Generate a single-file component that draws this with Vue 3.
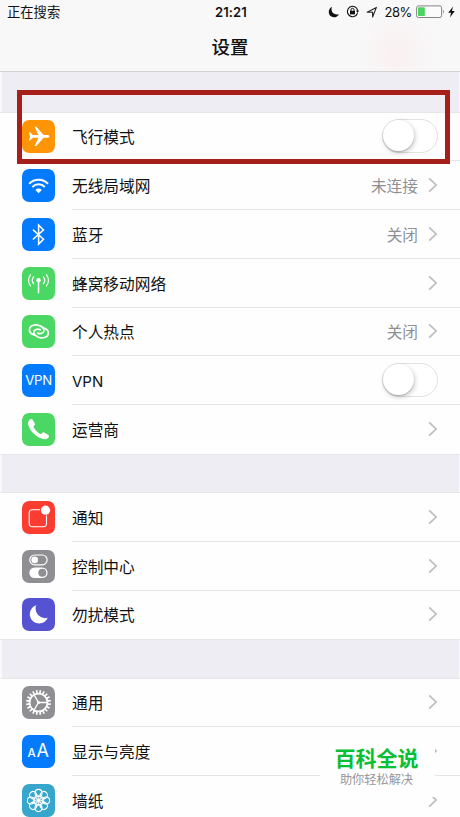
<script setup>
const groups = [
  [
    { icon: 'plane', color: '#ff9504', label: '飞行模式', toggle: true },
    { icon: 'wifi', color: '#047afd', label: '无线局域网', value: '未连接' },
    { icon: 'bluetooth', color: '#047afd', label: '蓝牙', value: '关闭' },
    { icon: 'cellular', color: '#4bd763', label: '蜂窝移动网络' },
    { icon: 'hotspot', color: '#4bd763', label: '个人热点', value: '关闭' },
    { icon: 'vpn', color: '#047afd', label: 'VPN', toggle: true },
    { icon: 'phone', color: '#4bd763', label: '运营商' },
  ],
  [
    { icon: 'notify', color: '#fb3c31', label: '通知' },
    { icon: 'control', color: '#8e8e93', label: '控制中心' },
    { icon: 'moon', color: '#5653d2', label: '勿扰模式' },
  ],
  [
    { icon: 'gear', color: '#8e8e93', label: '通用' },
    { icon: 'display', color: '#047afd', label: '显示与亮度' },
    { icon: 'flower', color: '#36a6cc', label: '墙纸' },
  ],
]
const teeth = Array.from({ length: 20 }, (_, i) => i * 18)
const petals = Array.from({ length: 8 }, (_, i) => i * 45)
</script>

<template>
  <div class="screen">
    <header class="header">
      <div class="status">
        <span class="carrier">正在搜索</span>
        <span class="clock">21:21</span>
        <span class="indicators">
          <svg class="s-moon" width="12" height="12" viewBox="0 0 12 12"><path d="M4 .8C-.2 3-.2 8.600 3.400 10.600 6.200 12.200 9.600 11 11 8.200 5.800 9.600 2.200 5.600 4 .8Z" fill="#111" /></svg>
          <svg class="s-lock" width="13" height="13" viewBox="0 0 13 13" fill="none" stroke="#111">
            <path d="M11.500 8.200A5.200 5.200 0 1 1 11.700 5.600" stroke-width="1.100" /><path d="M10 5.600h3l-1.400 2.300Z" fill="#111" stroke="none" />
            <rect x="4" y="5.800" width="5" height="3.600" fill="#111" stroke="none" /><path d="M5 6V4.800a1.500 1.500 0 0 1 3 0V6" />
          </svg>
          <svg class="s-arrow" width="12" height="12" viewBox="0 0 12 12"><path d="M1.200 6.200 10.400 1.400 6.600 11V6.200Z" fill="none" stroke="#222" stroke-width="1.100" stroke-linejoin="round" /></svg>
          <span class="percent">28%</span>
          <svg class="s-battery" width="30" height="14" viewBox="0 0 30 14">
            <rect x=".6" y=".9" width="25" height="11.600" rx="1.800" fill="#fbfbfb" stroke="#777" stroke-width=".9" />
            <rect x="2" y="2.300" width="6.800" height="8.800" rx=".6" fill="#4cd362" /><path d="M27 4.800q2 1.900 0 3.800Z" fill="#888" />
          </svg>
          <svg class="s-bolt" width="7" height="12" viewBox="0 0 7 12"><path d="M5.100.5.200 6.700h2.900L1.900 11.500 6.800 5H3.900Z" fill="#111" /></svg>
        </span>
      </div>
      <h1 class="title">设置</h1>
    </header>

    <main class="list">
      <section v-for="(rows, g) in groups" :key="g" class="group">
        <div v-for="row in rows" :key="row.label" class="row">
          <svg class="icon" viewBox="0 0 33 33" fill="none" stroke="#fff">
            <rect width="33" height="33" rx="7.200" :fill="row.color" stroke="none" />
            <path v-if="row.icon === 'plane'" fill="#fff" stroke="none" d="M6.900 12.200h1.200l2.900 2.900h5.400L12.600 6.700h1.800l7.200 8.400h3.900c2.600 0 2.600 2.600 0 2.600h-3.900l-7.200 8.400h-1.800l3.800-8.400H11l-2.900 2.900H6.900l1.200-4.200Z" />
            <g v-else-if="row.icon === 'wifi'" stroke-width="2.100">
              <path d="M7.200 14.700a13 13 0 0 1 18.800 0M10.400 18a8.500 8.500 0 0 1 12.400 0" />
              <path d="m16.600 24.200-3.200-3.100a4.700 4.700 0 0 1 6.400 0Z" fill="#fff" stroke="none" />
            </g>
            <path v-else-if="row.icon === 'bluetooth'" stroke-width="1.500" d="m10.900 11.600 10.600 9.600-4.900 4.900V7l4.900 4.900-10.600 9.600" />
            <g v-else-if="row.icon === 'cellular'" stroke-width="1.350" stroke-linecap="round">
              <circle cx="16.500" cy="13.300" r="2.200" fill="#fff" stroke="none" /><path d="M16.500 14v11.700" stroke-width="1.500" />
              <path d="M11.600 9.900a5.500 5.500 0 0 0 0 6.800M8.500 7.800a9 9 0 0 0 0 11M21.400 9.900a5.500 5.500 0 0 1 0 6.800M24.500 7.800a9 9 0 0 1 0 11" />
            </g>
            <g v-else-if="row.icon === 'hotspot'" stroke-width="1.700" stroke-linecap="round">
              <path d="M12.600 20.100C8.600 18.800 6.900 16.200 7.600 13.600 8.500 10.200 13.400 9.200 17.400 10.600 21.300 12 22.800 14.800 21.600 16.900 20.600 18.700 17.600 19 15.600 18.100" />
              <path transform="rotate(180 16.900 16.400)" d="M12.600 20.100C8.600 18.800 6.900 16.200 7.600 13.600 8.500 10.200 13.400 9.200 17.400 10.600 21.300 12 22.800 14.800 21.600 16.900 20.600 18.700 17.600 19 15.600 18.100" />
            </g>
            <text v-else-if="row.icon === 'vpn'" class="glyph" x="16.700" y="21" font-size="13.200" text-anchor="middle" textLength="27">VPN</text>
            <path v-else-if="row.icon === 'phone'" fill="#fff" stroke="none" d="M7.700 6.700c1.300-1.200 2.400-.7 3.100.4l1.900 3.200c.6 1.100.3 1.800-.5 2.300-1 .7-.8 1.400-.2 2.300 1.600 2.500 3.600 4.400 6 5.800.9.500 1.500.3 2.100-.5.600-.9 1.400-1.100 2.400-.5l3.500 2.100c1.400.9 1.300 2.100.2 3.100-1.900 1.700-4.500 1.600-7 .6C13.400 23.200 9 18.700 6.700 13.200 5.700 10.700 5.800 8.300 7.700 6.700Z" />
            <g v-else-if="row.icon === 'notify'">
              <rect x="7.200" y="8.800" width="17.300" height="17" rx="3.200" stroke-width="1.100" /><circle cx="23.500" cy="9.200" r="5.500" :fill="row.color" stroke="none" />
              <circle cx="23.500" cy="9.200" r="4.600" fill="#fff" stroke="none" />
            </g>
            <g v-else-if="row.icon === 'control'">
              <rect x="7.800" y="5" width="17.300" height="9.800" rx="4.900" stroke-width="1.200" /><circle cx="12.700" cy="9.900" r="3.300" fill="#fff" stroke="none" />
              <rect x="7.300" y="17.500" width="18.300" height="10.600" rx="5.300" fill="#fff" stroke="none" /><circle cx="20.300" cy="22.800" r="4" :fill="row.color" stroke="none" />
            </g>
            <path v-else-if="row.icon === 'moon'" fill="#fff" stroke="none" d="M14.200 7.300A9.300 9.300 0 1 0 25.700 19.700 9.500 9.500 0 0 1 14.200 7.300Z" />
            <g v-else-if="row.icon === 'gear'">
              <path v-for="a in teeth" :key="a" d="M16.500 4.100v3.500" stroke-width="1.700" :transform="`rotate(${a + 9} 16.500 16.500)`" />
              <circle cx="16.500" cy="16.500" r="8.900" stroke-width="1.700" /><circle cx="16.500" cy="16.500" r="1.500" fill="#fff" stroke="none" />
              <path d="M16.500 16.500h9M16.500 16.500l-4.600-7.800M16.500 16.500l-4.600 7.800" stroke-width="1.300" />
            </g>
            <g v-else-if="row.icon === 'display'">
              <text class="glyph medium" x="5.600" y="22" font-size="11.500">A</text><text class="glyph" x="14.400" y="22" font-size="18">A</text>
            </g>
            <g v-else stroke-width="1.100">
              <circle v-for="a in petals" :key="a" cx="16.500" cy="8.900" r="3.500" :transform="`rotate(${a} 16.500 16.500)`" />
              <circle v-for="a in petals" :key="'i' + a" cx="16.500" cy="12.700" r="1.900" stroke-width=".7" :transform="`rotate(${a + 22.5} 16.500 16.500)`" />
              <circle cx="16.500" cy="16.500" r="1.800" fill="#fff" stroke="none" />
            </g>
          </svg>
          <div class="content">
            <span class="label" :class="{ latin: row.icon === 'vpn' }">{{ row.label }}</span>
            <span v-if="row.toggle" class="switch"><i class="knob"></i></span>
            <template v-else>
              <span v-if="row.value" class="value">{{ row.value }}</span>
              <svg class="chevron" width="10" height="16" viewBox="0 0 10 16"><path d="m1.200 1.300 6.900 6.700-6.900 6.700" fill="none" stroke="#bdbdc1" stroke-width="1.700" /></svg>
            </template>
          </div>
        </div>
      </section>
    </main>

    <div class="highlight"></div>
    <aside class="badge">
      <strong class="brand">百科全说</strong>
      <span class="slogan">助你轻松解决</span>
    </aside>
  </div>
</template>

<style>
body { background: #fff; overflow: hidden; }
</style>
<style scoped>
.screen { position: relative; box-sizing: border-box; width: 460px; height: 817px; overflow: hidden; background: #fefefe; color: #111; font-family: Inter, "Noto Sans CJK SC", sans-serif; }
.header { box-sizing: border-box; height: 72px; border-bottom: 1px solid #d2d2d5; background: radial-gradient(ellipse 42px 48px at 397px 54px, #faf0f0, rgba(250, 242, 243, .6) 50%, transparent), #f8f8f8; }
.status { display: grid; grid-template-columns: 1fr auto 1fr; align-items: center; height: 23px; padding: 0 5px 0 7px; }
.carrier { font-size: 13.300px; }
.clock { font-size: 13px; font-weight: 600; letter-spacing: .1px; }
.indicators { display: flex; align-items: center; justify-content: flex-end; }
.s-lock { margin-left: 6px; }
.s-arrow { margin-left: 7px; }
.percent { margin-left: 6px; font-size: 13px; letter-spacing: -.4px; }
.s-battery { margin-left: 4px; }
.s-bolt { margin-left: 2px; }
.title { margin: 0; padding-top: 8px; text-align: center; font: 500 18.500px/30px "Noto Sans CJK SC", sans-serif; }
.list { display: flex; flex-direction: column; gap: 39.200px; padding-top: 40.500px; background: linear-gradient(90deg, #fafafb 2px, #eeedf3 2px, #eeedf3 459px, #fafafb 459px); }
.group { background: #fefefe; box-shadow: 0 0 0 .6px #e0e0e4; }
.row { display: flex; align-items: center; height: 48.770px; padding-left: 22px; }
.icon { flex: none; width: 33px; height: 33px; }
.content { display: flex; flex: 1; align-items: center; align-self: stretch; margin-left: 17px; padding-right: 22px; border-bottom: 1px solid #e5e5e8; }
.row:last-child .content { border-color: transparent; }
.label { flex: 1; padding-top: 4px; font-size: 15.700px; line-height: 24px; }
.latin { font-size: 15px; }
.value { padding-top: 4px; margin-right: 10px; color: #909094; font-size: 15.700px; line-height: 24px; }
.switch { box-sizing: border-box; width: 56.500px; height: 34px; border: 1.600px solid #e2e1e3; border-radius: 17px; background: #fff; }
.knob { display: block; width: 31px; height: 31px; border-radius: 50%; background: #fff; box-shadow: 0 1px 1px rgba(0, 0, 0, .18), 1px 2px 5px rgba(0, 0, 0, .22); }
.glyph { font-family: Inter, sans-serif; fill: #fff; stroke: none; }
.medium { font-weight: 500; }
.highlight { position: absolute; top: 90px; left: 17px; box-sizing: border-box; width: 433px; height: 74px; border: 5px solid #a61f1b; }
.badge { position: absolute; top: 739px; left: 320px; display: flex; flex-direction: column; align-items: center; box-sizing: border-box; width: 115px; height: 58px; padding: 6.500px 2px 0 0; background: #fefefe; white-space: nowrap; }
.brand { color: #08bf35; font: 700 21px/26px Inter, "Noto Sans CJK SC", sans-serif; }
.slogan { color: #96969a; font: 12.200px/15px Inter, "Noto Sans CJK SC", sans-serif; }
</style>
